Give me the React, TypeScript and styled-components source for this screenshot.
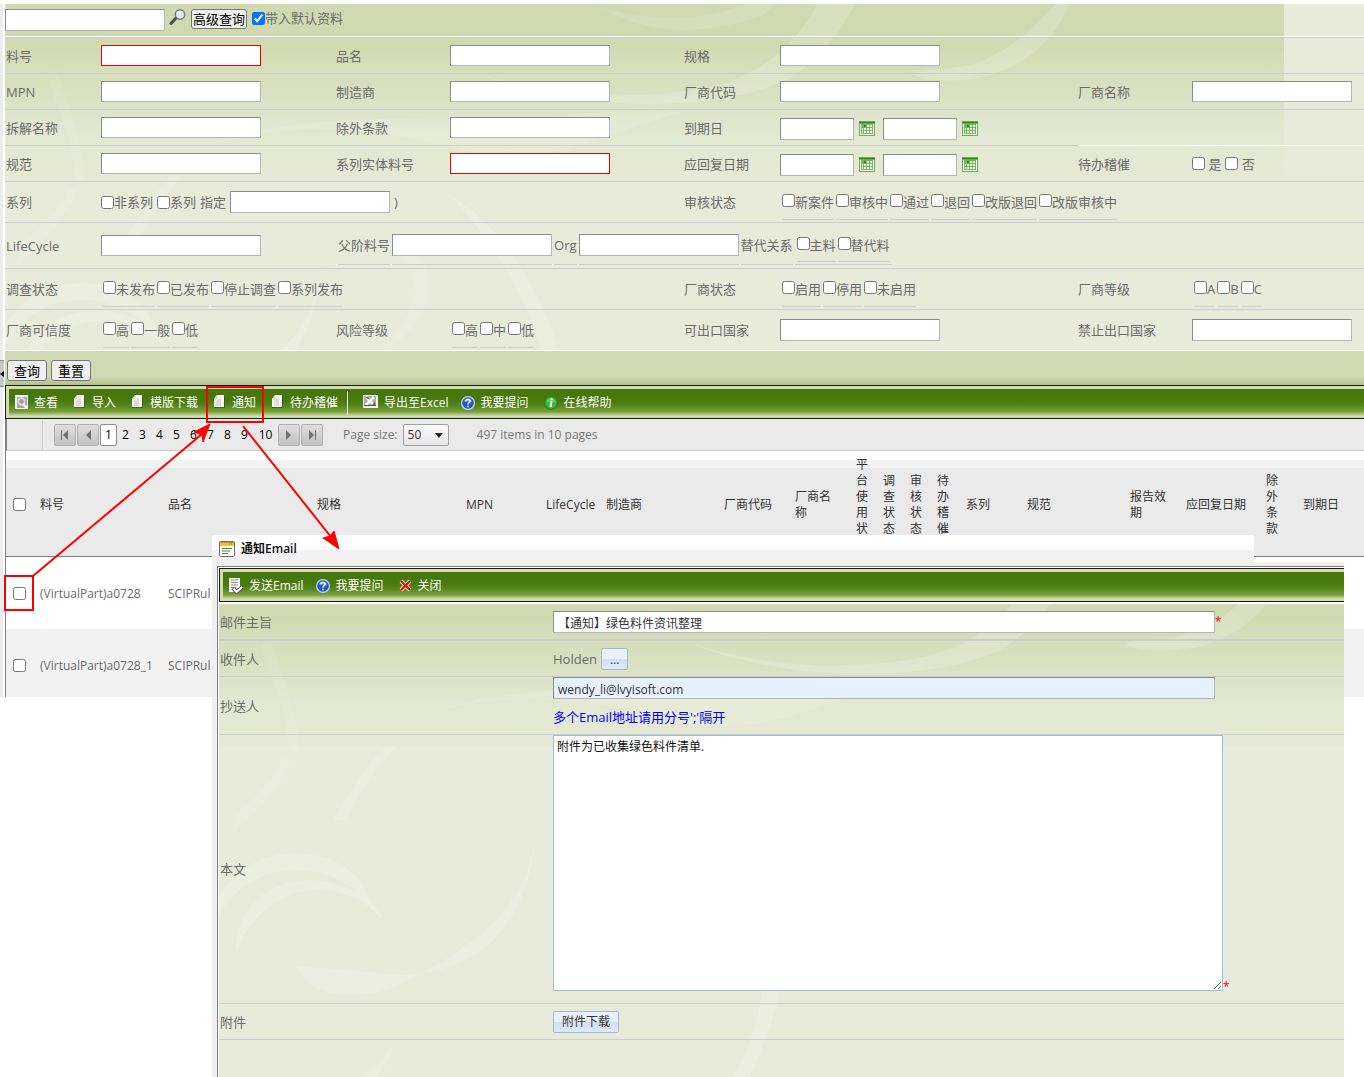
import React, { useId } from "react";
import styled, { createGlobalStyle, css } from "styled-components";

const Global = createGlobalStyle`
  * { box-sizing: border-box; }
  body { margin: 0; background: #fff; }
  body, button, input, select, textarea {
    font-family: "Open Sans", "Noto Sans CJK SC", sans-serif;
    font-size: 13px;
    line-height: 18px;
  }
`;

const Page = styled.div`
  position: relative;
  min-height: 100vh;
  padding-top: 4px;
  overflow: hidden;
  color: #6b6b6b;
`;

const Workspace = styled.div`
  display: grid;
  grid-template-columns: 5px minmax(0, 1fr);
`;

const Splitter = styled.div`
  border-right: 2px solid #fff;
  background: #ececec;
`;

const SplitterHandle = styled.button`
  display: flex;
  align-items: center;
  width: 4px;
  height: 27px;
  margin: 356px 0 0;
  padding: 0;
  border: 0;
  border-top: 1px solid #8c8c8c;
  border-bottom: 1px solid #8c8c8c;
  background: #c8c8c8;
`;

const leafy = css`
  background: linear-gradient(#d1d9b1 0, #d1d9b1 40px, #d6ddb9 60px, #dae1c2 90px, #e3e8d2 130px, #e5e9d5 172px, #e8ebda 172px) 0 0 / 1279px 180px no-repeat, #e8ebda;
`;

const SearchPanel = styled.form`
  position: relative;
  overflow: hidden;
  ${leafy}
`;

const SwirlArt = styled.svg<{ $rise?: number }>`
  position: absolute;
  top: ${p => -(p.$rise ?? 0)}px;
  left: 0;
  pointer-events: none;
`;

const QuickBar = styled.div`
  position: relative;
  display: flex;
  align-items: flex-start;
  height: 34px;
  padding-top: 5px;
  border-bottom: 1px solid #ccc;
  box-shadow: inset 0 -1px 0 #fff;
`;

const IconButton = styled.button`
  display: inline-flex;
  margin: 0 4px;
  padding: 0;
  border: 0;
  background: none;
`;

const DateButton = styled(IconButton)`
  margin: 0 8px 0 5px;
`;

const PlainButton = styled.button`
  height: 21px;
  padding: 0 6px;
  border: 1px solid #767676;
  border-radius: 3px;
  background: #efefef;
  color: #000;
  line-height: 18px;
  white-space: nowrap;
`;

const AdvancedButton = styled(PlainButton)`
  height: 20px;
  margin-right: 5px;
  padding: 0 1px;
  line-height: 16px;
`;

const TextBox = styled.input<{ $w?: number; $tall?: boolean; $alert?: boolean }>`
  width: ${p => p.$w ?? 160}px;
  height: ${p => (p.$tall ? 22 : 21)}px;
  padding: 0 4px;
  border: 1px solid;
  border-color: ${p => (p.$alert ? "#e00" : "#8c8c8c #b5b5b5 #b5b5b5 #8c8c8c")};
  background: #fff;
`;

const Tick = styled.input.attrs({ type: "checkbox" })`
  width: 13px;
  height: 13px;
  margin: 0;
  flex: none;
`;

const TickLabel = styled.label`
  display: inline-flex;
  align-items: center;
  white-space: nowrap;
`;

const FormRow = styled.div<{ $h: number; $last?: boolean }>`
  position: relative;
  display: grid;
  grid-template-columns: 95px 235fr 114px 234fr 96px 298fr 114px 172fr;
  min-height: ${p => p.$h}px;
  padding-left: 1px;
  border-bottom: 1px solid ${p => (p.$last ? "#fff" : "#ccc")};
`;

const Cell = styled.div<{ $col: number; $span?: number; $rule?: boolean; $gap?: number }>`
  grid-column: ${p => p.$col} / span ${p => p.$span ?? 1};
  display: flex;
  align-items: center;
  gap: ${p => p.$gap ?? 0}px;
  min-width: 0;
  white-space: nowrap;
  box-shadow: ${p => (p.$rule ? "0 -1px 0 #fff" : "none")};
`;

const DateCell = styled(Cell)`
  padding-top: 2px;
`;

const TickList = styled.div<{ $h?: number }>`
  display: flex;
  gap: 2px;
  padding: 0 2px;
  ${TickLabel} {
    height: ${p => p.$h ?? 35}px;
    border-bottom: 1px solid #ccc;
  }
  ${Tick} { margin-bottom: 3px; }
`;

const InlineFields = styled.div`
  display: flex;
  gap: 2px;
  padding-left: 2px;
`;

const InlineField = styled.div`
  display: flex;
  align-items: center;
  height: 39px;
  border-bottom: 1px solid #ccc;
`;

const ActionBar = styled.div`
  position: relative;
  display: flex;
  gap: 4px;
  height: 34px;
  padding: 9px 2px 0;
  background: linear-gradient(#d1d9b1 0, #d1d9b1 26px, #b4c18b 34px);
`;

const Toolbar = styled.div`
  position: relative;
  height: 34px;
  padding: 3px 0 2px 3px;
  border: solid #14200a;
  border-width: 1px 0 1px 1px;
  background: #d3dbb4;
`;

const ToolbarFace = styled.div`
  display: flex;
  align-items: center;
  height: 27px;
  padding-left: 6px;
  background: linear-gradient(#44760a 0, #48790e 12px, #57871d 17px, #7ba13f 23px, #a9c272 25px, #d0dab0 27px);
`;

const ToolButton = styled.button<{ $near?: boolean }>`
  display: inline-flex;
  align-items: center;
  gap: 6px;
  margin-right: ${p => (p.$near ? 12 : 15)}px;
  padding: 0;
  border: 0;
  background: none;
  color: #fff;
  font-size: 12px;
  line-height: 16px;
  white-space: nowrap;
`;

const ToolDivider = styled.span`
  width: 1px;
  height: 24px;
  margin: 0 15px 0 -6px;
  background: #f0f3e4;
`;

const Pager = styled.nav`
  display: flex;
  align-items: center;
  height: 32px;
  padding-top: 1px;
  border-left: 2px solid #808080;
  border-bottom: 1px solid #ccc;
  background: #eaeaea;
  color: #333;
`;

const PagerLead = styled.span`
  width: 36px;
  height: 30px;
  margin-right: 11px;
  border-right: 1px solid #ccc;
`;

const PagerStep = styled.button`
  display: flex;
  align-items: center;
  justify-content: center;
  width: 22px;
  height: 22px;
  margin-right: 1px;
  padding: 0;
  border: 1px solid #b0b0b0;
  border-radius: 2px;
  background: linear-gradient(#dedede, #c2c2c2);
`;

const PageLink = styled.a<{ $on?: boolean; $wide?: boolean }>`
  width: ${p => (p.$wide ? 25 : 17)}px;
  height: 22px;
  border: 1px solid ${p => (p.$on ? "#8c8c8c" : "transparent")};
  border-radius: 2px;
  background: ${p => (p.$on ? "#fff" : "transparent")};
  color: #000;
  font-size: 12px;
  line-height: 20px;
  text-align: center;
  text-decoration: none;
`;

const PagerText = styled.span`
  color: #777;
  font-size: 12px;
  white-space: nowrap;
`;

const SizeBox = styled.label`
  position: relative;
  display: flex;
  align-items: center;
  gap: 5px;
  margin: 0 28px 0 19px;
  svg { position: absolute; right: 6px; }
`;

const SizeSelect = styled.select`
  appearance: none;
  width: 46px;
  height: 22px;
  padding: 0 4px;
  border: 1px solid #a0a0a0;
  border-radius: 2px;
  background: linear-gradient(#fbfbfb, #e6e6e6);
  color: #333;
  font-size: 12px;
`;

const Grid = styled.table`
  width: 100%;
  table-layout: fixed;
  border-collapse: separate;
  border-spacing: 0;
  border-left: 1px solid #808080;
  font-size: 12px;
  line-height: 16px;
`;

const HeadCell = styled.th`
  height: 106px;
  padding: 2px 8px 0 6px;
  border-bottom: 1px solid #808080;
  color: #333;
  font-weight: 400;
  text-align: left;
  vertical-align: middle;
  ${Tick} { display: block; margin-left: 1px; }
`;

const HeadRow = styled.tr`
  background: linear-gradient(#fff 9px, #f2f2f2 9px, #f2f2f2 17px, #eaeaea 17px);
`;

const BodyCell = styled.td`
  padding: 29px 0 27px 6px;
  white-space: nowrap;
  overflow: hidden;
`;

const BodyRow = styled.tr`
  &:nth-child(even) { background: #f2f2f2; }
  &:last-child ${BodyCell} { padding-bottom: 23px; }
  ${Tick} { display: block; margin: 0 0 2px 1px; }
`;

const Dialog = styled.section`
  position: absolute;
  top: 535px;
  right: 20px;
  bottom: 0;
  left: 212px;
  display: flex;
  flex-direction: column;
`;

const DialogTitle = styled.h2`
  display: flex;
  align-items: center;
  gap: 6px;
  height: 27px;
  margin: 0 90px 0 0;
  padding: 1px 0 0 7px;
  border-radius: 2px 0 0 0;
  background: linear-gradient(#fff 15px, #f2f2f2 15px);
  color: #111;
  font-size: 12px;
  font-weight: 600;
`;

const DialogFrame = styled.div`
  flex: 1;
  display: flex;
  flex-direction: column;
  padding: 4px 0 0 5px;
  background: #f0f0f0;
`;

const DialogBody = styled.div`
  flex: 1;
  display: flex;
  flex-direction: column;
  padding: 1px 0 0 1px;
  border: solid #808080;
  border-width: 1px 0 0 1px;
  background: #fff;
`;

const MailForm = styled.form`
  position: relative;
  flex: 1;
  overflow: hidden;
  margin-top: 2px;
  ${leafy}
  background-position: 0 -30px, 0 0;
`;

const MailRow = styled.div<{ $h: number; $thick?: boolean }>`
  position: relative;
  display: grid;
  grid-template-columns: 334px minmax(0, 1fr);
  min-height: ${p => p.$h}px;
  border-bottom: ${p => (p.$thick ? 2 : 1)}px solid #ccc;
`;

const MailLabel = styled.label`
  align-self: center;
  padding-left: 1px;
`;

const MailValue = styled.div<{ $top?: boolean }>`
  display: flex;
  align-items: ${p => (p.$top ? "flex-start" : "center")};
  gap: 4px;
`;

const MailStack = styled(MailValue)`
  flex-direction: column;
  gap: 9px;
`;

const WideBox = styled(TextBox)<{ $filled?: boolean }>`
  width: 662px;
  max-width: 90%;
  padding-top: 3px;
  background: ${p => (p.$filled ? "#e8f0fe" : "#fff")};
  color: #333;
  font-size: 12px;
`;

const Required = styled.span`
  margin-left: -4px;
  color: #f00;
  font-size: 12px;
  line-height: 16px;
`;

const TextRequired = styled(Required)`
  align-self: flex-end;
  margin-bottom: 8px;
`;

const Hint = styled.span`
  color: #00f;
`;

const MailText = styled.textarea`
  width: 670px;
  max-width: 90%;
  height: 256px;
  padding: 3px;
  border: 1px solid #a2bbd8;
  color: #111;
  font-size: 12px;
  line-height: 16px;
`;

const BlueButton = styled.button<{ $low?: boolean }>`
  height: 22px;
  padding: ${p => (p.$low ? "2px 8px 0" : "0 8px")};
  border: 1px solid #9db9d8;
  border-radius: 2px;
  background: linear-gradient(#e9f1fc 50%, #cfe0f4 50%, #dfeafa);
  color: #333;
  font-size: 12px;
  white-space: nowrap;
`;

const Marks = styled.svg`
  position: absolute;
  top: 0;
  left: 0;
  pointer-events: none;
`;

const Swirls = ({ rise }: { rise?: number }) => (
  <SwirlArt $rise={rise} width="1279" height="620" viewBox="0 0 1279 620" fill="#fff" fillOpacity=".18" aria-hidden="true">
    <path d="M471 69C560 106 700 112 782 76C812 58 832 34 850 0L812 0C790 44 750 74 700 84C620 98 540 92 471 69Z" />
    <path d="M1050 0C1024 30 990 58 955 63C930 66 912 66 905 70C925 79 960 78 986 71C1022 60 1052 34 1064 0Z" />
    <path d="M596 4C640 30 700 34 760 10L770 0L742 0C700 16 650 18 596 4Z" opacity=".6" />
    <path d="M316 256C316 312 290 366 244 388C206 404 172 402 152 398L78 392C84 412 110 424 140 420C160 420 176 414 190 406C256 372 314 330 316 256Z" opacity=".9" />
    <path d="M0 322C14 298 40 280 76 279C116 280 146 298 156 340C140 310 104 294 70 296C36 300 12 318 0 342Z" />
    <path d="M17 376C16 340 40 308 92 306C128 308 156 324 164 346C146 326 124 316 98 316C60 318 34 340 17 376Z" />
    <path d="M164 173C150 190 128 220 114 246L128 246C140 218 160 192 176 173Z" opacity=".7" />
    <path d="M72 184C64 212 36 240 10 263L18 240C38 222 56 204 64 184Z" opacity=".6" />
    <path d="M445 192C490 214 556 300 562 400C560 440 540 480 524 520L504 520C534 470 548 430 542 380C536 320 500 250 445 192Z" />
    <path d="M174 468C168 486 146 500 120 520L138 520C158 506 172 490 174 468Z" opacity=".8" />
    <path d="M330 252C370 226 414 250 410 290C402 318 390 334 376 346C402 336 426 310 424 276C418 236 370 220 330 252Z" opacity=".5" />
    <path d="M180 150C260 116 360 118 470 150C560 160 600 128 680 108C600 102 520 120 440 116C340 112 240 120 180 150Z" opacity=".7" />
    <path d="M52 66C60 100 76 120 80 176L70 176C68 130 50 100 42 70Z" opacity=".5" />
  </SwirlArt>
);

const SearchGlass = () => (
  <svg width="18" height="18" viewBox="0 0 18 18" aria-hidden="true">
    <path d="M2 14.500 7 9" stroke="#4d4d55" strokeWidth="3" strokeLinecap="round" />
    <circle cx="11" cy="5.500" r="4.700" fill="#dfe9f5" stroke="#77777d" strokeWidth="1.500" />
    <path d="M8 5a3 3 0 0 1 4-2" stroke="#fff" strokeWidth="1.500" fill="none" />
  </svg>
);

const CalendarIcon = () => (
  <svg width="16" height="15" viewBox="0 0 16 15" aria-hidden="true">
    <path d="M0 0h16v15H0z" fill="#66b04f" />
    <path d="M0 1h16v1H0z" fill="#38821f" />
    <path d="M1 3h14v11H1z" fill="#fff" />
    <path d="M2 3h12v10H2z" fill="#6fb857" />
    <path d="M5 4h2v2H5z" fill="#38821f" />
    <path d="M8 4h2v2H8zM11 4h2v2h-2zM3 7h1v2H3zM5 7h2v2H5zM8 7h2v2H8zM11 7h2v2h-2zM3 10h1v2H3zM5 10h2v2H5zM8 10h2v2H8zM11 10h2v2h-2z" fill="#fff" />
  </svg>
);

const DocIcon = () => (
  <svg width="13" height="16" viewBox="0 0 13 16" aria-hidden="true">
    <path d="M3 2h9v11H1v-2z" fill="#2a4a0c" opacity=".6" />
    <path d="M4 0h7v12H1V4z" fill="#f6f6f6" />
    <path d="M4 0v4H1z" fill="#cfd3c8" />
    <path d="M3 6 8 2v9H3z" fill="#dcdcdc" />
  </svg>
);

const ViewIcon = () => (
  <svg width="13" height="16" viewBox="0 0 13 16" aria-hidden="true">
    <path d="M0 0h13v14H0z" fill="#f2f2f2" />
    <path d="M2 2h10v11H2z" fill="#a6a6a6" />
    <circle cx="6.500" cy="6.500" r="3.400" fill="#f4f4f4" stroke="#d9d9d9" strokeWidth="1.500" />
    <circle cx="6.500" cy="6.500" r="2.400" fill="#9c9c9c" />
    <path d="m8 9 4 4" stroke="#fff" strokeWidth="2" />
  </svg>
);

const ExcelIcon = () => (
  <svg width="15" height="15" viewBox="0 0 15 15" aria-hidden="true">
    <path d="M0 0h15v13H0z" fill="#f2f2f2" />
    <path d="M1 1h12v9H1z" fill="#a9a9a9" />
    <path d="m3 2 8 8M11 2 3 10" stroke="#fff" strokeWidth="2.500" />
    <path d="M2 2h3l2 3zM9 10l3-3v3zM1 10h12v1H1z" fill="#555" />
  </svg>
);

const BadgeIcon = ({ kind }: { kind: "help" | "info" }) => (
  <svg width="14" height="14" viewBox="0 0 14 14" aria-hidden="true">
    <circle cx="7" cy="7" r="7" fill={kind === "help" ? "#c8d8f4" : "#238a1c"} />
    <circle cx="7" cy="7" r="5.800" fill={kind === "help" ? "#2157c4" : "#3fb838"} />
    <path d="M2.500 6a4.600 4.600 0 0 1 9 0z" fill="#fff" opacity=".25" />
    {kind === "help" ? (
      <path d="M4.800 5.300c.1-2.500 4.300-2.500 4.300-.2 0 1.700-2.100 1.600-2.100 3.300M7 9.800v1.500" stroke="#fff" strokeWidth="1.500" fill="none" />
    ) : (
      <path d="M7.900 2.400 7.600 4.200M7.400 5.500 6.500 11" stroke="#fff" strokeWidth="2" fill="none" />
    )}
  </svg>
);

const SendIcon = () => (
  <svg width="14" height="16" viewBox="0 0 14 16" aria-hidden="true">
    <path d="M0 0h11v14H0z" fill="#f4f4f4" />
    <path d="M2 2h7M2 4.500h7M2 7h7M2 9.500h5" stroke="#8b8b8b" />
    <path d="m4 10 3.500 4L14 8.500" stroke="#555" strokeWidth="4" fill="none" />
    <path d="m4.500 10.500 3 3.500 5.500-5" stroke="#fff" strokeWidth="2" fill="none" />
  </svg>
);

const CloseIcon = () => (
  <svg width="13" height="13" viewBox="0 0 13 13" aria-hidden="true">
    <path d="m2 2 9 9M11 2l-9 9" stroke="#f4e6c8" strokeWidth="4" />
    <path d="m2 2 9 9M11 2l-9 9" stroke="#d81a10" strokeWidth="2.400" />
  </svg>
);

const WindowIcon = () => (
  <svg width="16" height="16" viewBox="0 0 16 16" aria-hidden="true">
    <rect x=".5" y=".5" width="15" height="15" rx="1" fill="#fff" stroke="#77705a" />
    <path d="M1 1h14v4H1z" fill="#e9c437" />
    <path d="M1 1h14v1H1z" fill="#d28a2c" />
    <path d="M10 3h1M12 3h1" stroke="#5a7a20" />
    <path d="M3 7.500h10M3 10h8M3 12.500h6" stroke="#3d8b35" />
  </svg>
);

const Step = ({ dir, end, label }: { dir: "left" | "right"; end?: boolean; label: string }) => (
  <PagerStep type="button" aria-label={label}>
    <svg width="10" height="10" viewBox="0 0 10 10" fill="#707070" aria-hidden="true">
      {dir === "left" ? <path d="M8 0v10L3 5z" /> : <path d="M2 0v10l5-5z" />}
      {end && <path d={dir === "left" ? "M1 0h1v10H1z" : "M8 0h1v10H8z"} />}
    </svg>
  </PagerStep>
);

type FieldProps = { label: string; col: number; alert?: boolean; tall?: boolean };

const Field = ({ label, col, alert, tall }: FieldProps) => {
  const id = useId();
  return (
    <>
      <Cell $col={col}><label htmlFor={id}>{label}</label></Cell>
      <Cell $col={col + 1}><TextBox id={id} $alert={alert} $tall={tall} /></Cell>
    </>
  );
};

const DateRange = ({ label }: { label: string }) => {
  const id = useId();
  return (
    <>
      <Cell $col={5}><label htmlFor={id}>{label}</label></Cell>
      <DateCell $col={6}>
        <TextBox id={id} $w={74} $tall />
        <DateButton type="button" aria-label={label}><CalendarIcon /></DateButton>
        <TextBox $w={74} $tall aria-label={label} />
        <DateButton type="button" aria-label={label}><CalendarIcon /></DateButton>
      </DateCell>
    </>
  );
};

const Ticks = ({ items, h }: { items: string[]; h?: number }) => (
  <TickList $h={h}>
    {items.map(t => <TickLabel key={t}><Tick />{t}</TickLabel>)}
  </TickList>
);

const TickField = ({ label, col, items }: { label: string; col: number; items: string[] }) => (
  <>
    <Cell $col={col}>{label}</Cell>
    <Cell $col={col + 1}><Ticks items={items} /></Cell>
  </>
);

const Tool = ({ icon, near, children }: { icon: React.ReactNode; near?: boolean; children: React.ReactNode }) => (
  <ToolButton type="button" $near={near}>{icon}{children}</ToolButton>
);

const columns: [string, number][] = [
  ["料号", 128], ["品名", 149], ["规格", 149], ["MPN", 80], ["LifeCycle", 60], ["制造商", 118],
  ["厂商代码", 71], ["厂商名称", 61], ["平台使用状态", 27], ["调查状态", 27], ["审核状态", 27],
  ["待办稽催", 29], ["系列", 61], ["规范", 103], ["报告效期", 56], ["应回复日期", 80],
  ["除外条款", 37], ["到期日", 67],
];

const parts = [
  { no: "(VirtualPart)a0728", name: "SCIPRul" },
  { no: "(VirtualPart)a0728_1", name: "SCIPRul" },
];

export default function App() {
  return (
    <Page>
      <Global />
      <Workspace>
        <Splitter>
          <SplitterHandle type="button" aria-label="收合">
            <svg width="4" height="6" viewBox="0 0 4 6" aria-hidden="true"><path d="M4 0v6L0 3z" /></svg>
          </SplitterHandle>
        </Splitter>
        <main>
          <SearchPanel onSubmit={e => e.preventDefault()}>
            <Swirls />
            <QuickBar>
              <TextBox $tall aria-label="查询" />
              <IconButton type="button" aria-label="查询"><SearchGlass /></IconButton>
              <AdvancedButton type="button">高级查询</AdvancedButton>
              <TickLabel><Tick defaultChecked />带入默认资料</TickLabel>
            </QuickBar>
            <FormRow $h={36}>
              <Field col={1} label="料号" alert />
              <Field col={3} label="品名" />
              <Field col={5} label="规格" />
            </FormRow>
            <FormRow $h={36}>
              <Field col={1} label="MPN" />
              <Field col={3} label="制造商" />
              <Field col={5} label="厂商代码" />
              <Field col={7} label="厂商名称" />
            </FormRow>
            <FormRow $h={36}>
              <Field col={1} label="拆解名称" />
              <Field col={3} label="除外条款" />
              <DateRange label="到期日" />
            </FormRow>
            <FormRow $h={36}>
              <Field col={1} label="规范" />
              <Field col={3} label="系列实体料号" alert />
              <DateRange label="应回复日期" />
              <Cell $col={7} $rule>待办稽催</Cell>
              <Cell $col={8} $rule $gap={4}>
                <TickLabel><Tick />&nbsp;是</TickLabel>
                <TickLabel><Tick />&nbsp;否</TickLabel>
              </Cell>
            </FormRow>
            <FormRow $h={41}>
              <Cell $col={1}>系列</Cell>
              <Cell $col={2} $span={3} $gap={4}>
                <TickLabel><Tick />非系列</TickLabel>
                <TickLabel><Tick />系列</TickLabel>
                <label htmlFor="series-name">指定</label>
                <TextBox id="series-name" $tall />
                <span>)</span>
              </Cell>
              <TickField col={5} label="审核状态" items={["新案件", "审核中", "通过", "退回", "改版退回", "改版审核中"]} />
            </FormRow>
            <FormRow $h={46}>
              <Field col={1} label="LifeCycle" />
              <Cell $col={3} $span={6}>
                <InlineFields>
                  <InlineField><label htmlFor="parent-no">父阶料号</label></InlineField>
                  <InlineField><TextBox id="parent-no" $tall /></InlineField>
                  <InlineField><label htmlFor="org">Org</label></InlineField>
                  <InlineField><TextBox id="org" $tall /></InlineField>
                  <InlineField>替代关系</InlineField>
                  <InlineField><Ticks items={["主料", "替代料"]} h={33} /></InlineField>
                </InlineFields>
              </Cell>
            </FormRow>
            <FormRow $h={41}>
              <TickField col={1} label="调查状态" items={["未发布", "已发布", "停止调查", "系列发布"]} />
              <TickField col={5} label="厂商状态" items={["启用", "停用", "未启用"]} />
              <TickField col={7} label="厂商等级" items={["A", "B", "C"]} />
            </FormRow>
            <FormRow $h={41} $last>
              <TickField col={1} label="厂商可信度" items={["高", "一般", "低"]} />
              <TickField col={3} label="风险等级" items={["高", "中", "低"]} />
              <Field col={5} label="可出口国家" tall />
              <Field col={7} label="禁止出口国家" tall />
            </FormRow>
            <ActionBar>
              <PlainButton type="submit">查询</PlainButton>
              <PlainButton type="reset">重置</PlainButton>
            </ActionBar>
          </SearchPanel>

          <Toolbar>
            <ToolbarFace>
              <Tool icon={<ViewIcon />}>查看</Tool>
              <Tool icon={<DocIcon />}>导入</Tool>
              <Tool icon={<DocIcon />}>模版下载</Tool>
              <Tool icon={<DocIcon />}>通知</Tool>
              <Tool icon={<DocIcon />}>待办稽催</Tool>
              <ToolDivider />
              <Tool icon={<ExcelIcon />} near>导出至Excel</Tool>
              <Tool icon={<BadgeIcon kind="help" />}>我要提问</Tool>
              <Tool icon={<BadgeIcon kind="info" />}>在线帮助</Tool>
            </ToolbarFace>
          </Toolbar>

          <Pager>
            <PagerLead />
            <Step dir="left" end label="首页" />
            <Step dir="left" label="上一页" />
            {[1, 2, 3, 4, 5, 6, 7, 8, 9, 10].map(n => (
              <PageLink key={n} href="#" $on={n === 1} $wide={n === 10}>{n}</PageLink>
            ))}
            <Step dir="right" label="下一页" />
            <Step dir="right" end label="末页" />
            <SizeBox>
              <PagerText>Page size:</PagerText>
              <SizeSelect defaultValue="50"><option>50</option></SizeSelect>
              <svg width="8" height="5" viewBox="0 0 8 5" aria-hidden="true"><path d="M0 0h8L4 5z" fill="#222" /></svg>
            </SizeBox>
            <PagerText>497 items in 10 pages</PagerText>
          </Pager>

          <Grid>
            <colgroup>
              <col width={28} />
              {columns.map(([name, w]) => <col key={name} width={w} />)}
            </colgroup>
            <thead>
              <HeadRow>
                <HeadCell><Tick aria-label="全选" /></HeadCell>
                {columns.map(([name]) => <HeadCell key={name}>{name}</HeadCell>)}
              </HeadRow>
            </thead>
            <tbody>
              {parts.map(p => (
                <BodyRow key={p.no}>
                  <BodyCell><Tick aria-label={p.no} /></BodyCell>
                  <BodyCell>{p.no}</BodyCell>
                  <BodyCell>{p.name}</BodyCell>
                  <BodyCell colSpan={columns.length - 2} />
                </BodyRow>
              ))}
            </tbody>
          </Grid>
        </main>
      </Workspace>

      <Dialog role="dialog" aria-labelledby="mail-title">
        <DialogTitle id="mail-title"><WindowIcon />通知Email</DialogTitle>
        <DialogFrame>
          <DialogBody>
            <Toolbar>
              <ToolbarFace>
                <Tool icon={<SendIcon />} near>发送Email</Tool>
                <Tool icon={<BadgeIcon kind="help" />}>我要提问</Tool>
                <Tool icon={<CloseIcon />}>关闭</Tool>
              </ToolbarFace>
            </Toolbar>
            <MailForm onSubmit={e => e.preventDefault()}>
              <Swirls rise={30} />
              <MailRow $h={37} $thick>
                <MailLabel htmlFor="subject">邮件主旨</MailLabel>
                <MailValue>
                  <WideBox id="subject" $tall defaultValue="【通知】绿色料件资讯整理" />
                  <Required>*</Required>
                </MailValue>
              </MailRow>
              <MailRow $h={36}>
                <MailLabel as="span">收件人</MailLabel>
                <MailValue>Holden<BlueButton type="button" $low>...</BlueButton></MailValue>
              </MailRow>
              <MailRow $h={58}>
                <MailLabel htmlFor="cc">抄送人</MailLabel>
                <MailStack $top>
                  <WideBox id="cc" $tall $filled defaultValue="wendy_li@lvyisoft.com" />
                  <Hint>多个Email地址请用分号';'隔开</Hint>
                </MailStack>
              </MailRow>
              <MailRow $h={269}>
                <MailLabel htmlFor="content">本文</MailLabel>
                <MailValue $top>
                  <MailText id="content" defaultValue="附件为已收集绿色料件清单." />
                  <TextRequired>*</TextRequired>
                </MailValue>
              </MailRow>
              <MailRow $h={36}>
                <MailLabel as="span">附件</MailLabel>
                <MailValue><BlueButton type="button">附件下载</BlueButton></MailValue>
              </MailRow>
            </MailForm>
          </DialogBody>
        </DialogFrame>
      </Dialog>

      <Marks width="360" height="640" viewBox="0 0 360 640" fill="none" stroke="#f00" strokeWidth="2" aria-hidden="true">
        <path d="M5 576h28v34H5zM207 387h56v35h-56z" />
        <path d="M33 576 202 434M243 426l88 111" />
        <path d="m210 424-16 8 8 3 1 7zM339 549l-16-11 7-2 4-5z" fill="#f00" strokeWidth="1" />
      </Marks>
    </Page>
  );
}
